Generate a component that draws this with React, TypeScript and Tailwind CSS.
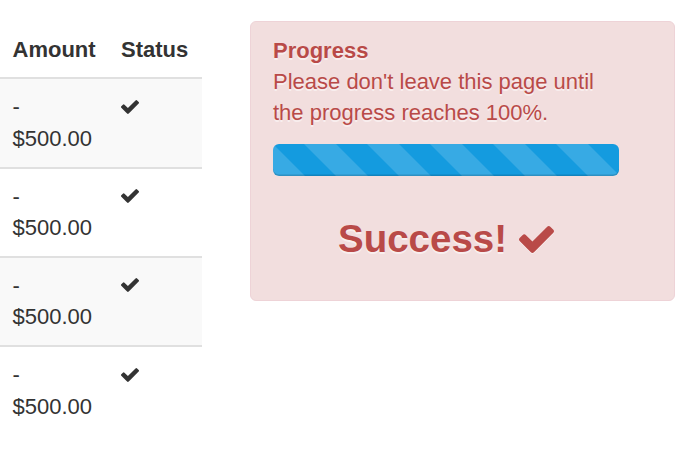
import React from "react";

const CHECK =
  "M1671 566q0 40-28 68l-724 724-136 136q-28 28-68 28t-68-28l-136-136-362-362q-28-28-28-68t28-68l136-136q28-28 68-28t68 28l294 295 656-657q28-28 68-28t68 28l136 136q28 28 28 68z";

function Check({ w, h, className }: { w: number; h: number; className?: string }) {
  return (
    <svg viewBox="121 334 1550 1188" width={w} height={h} fill="currentColor" className={className}>
      <path d={CHECK} />
    </svg>
  );
}

const rows = [0, 1, 2, 3];

export default function App() {
  return (
    <div className="w-[690px] h-[464px] bg-white overflow-hidden font-['Liberation_Sans',Arial,sans-serif] text-[#333333]">
      <div className="flex items-start pt-[21px]">
        {/* Table */}
        <div className="w-[202px] text-[22px] leading-[31.4px]">
          <div className="grid grid-cols-[108.5px_93.5px] font-bold">
            <div className="pl-[12.5px] pt-[12.5px] pb-[12.5px]">Amount</div>
            <div className="pl-[12.5px] pt-[12.5px] pb-[12.5px]">Status</div>
          </div>
          {rows.map((i) => (
            <div
              key={i}
              className={`grid grid-cols-[108.5px_93.5px] border-t-[2px] border-[#e0e0e0] ${
                i % 2 === 0 ? "bg-[#f9f9f9]" : "bg-white"
              }`}
            >
              <div className="pl-[12.5px] pt-[12px] pb-[12.5px]">
                <div>-</div>
                <div>$500.00</div>
              </div>
              <div className="pl-[12.5px] pt-[12px] pb-[12.5px]">
                <div className="h-[31.4px] flex items-center">
                  <Check w={18} h={14} className="text-[#333333] -mt-[1px]" />
                </div>
              </div>
            </div>
          ))}
        </div>

        {/* Alert */}
        <div className="ml-[48px] w-[425px] h-[280px] rounded-[6px] border border-[#eed3d7] bg-[#f2dede] text-[#b94a48] pt-[12.5px] pl-[22px] pr-[55px] pb-[12.5px] text-[22px] leading-[31.4px] [text-shadow:0_1.5px_0_rgba(255,255,255,0.5)]">
          <div className="font-bold">Progress</div>
          <div>
            Please don&apos;t leave this page until
            <br />
            the progress reaches 100%.
          </div>
          <div className="mt-[15.5px] h-[31.4px] rounded-[6px] overflow-hidden bg-[#149bdf] bg-[linear-gradient(45deg,rgba(255,255,255,0.15)_25%,transparent_25%,transparent_50%,rgba(255,255,255,0.15)_50%,rgba(255,255,255,0.15)_75%,transparent_75%,transparent)] bg-[length:63px_63px] bg-[position:31.5px_0px] shadow-[inset_0_-1.5px_0_rgba(0,0,0,0.15)]" />
          <div className="mt-[31.4px] h-[63px] flex items-center justify-center gap-[12px] font-bold text-[38.5px] leading-[63px]">
            <span>Success!</span>
            <Check w={35} h={27} className="mt-[2px] drop-shadow-[0_1.5px_0_rgba(255,255,255,0.5)]" />
          </div>
        </div>
      </div>
    </div>
  );
}
